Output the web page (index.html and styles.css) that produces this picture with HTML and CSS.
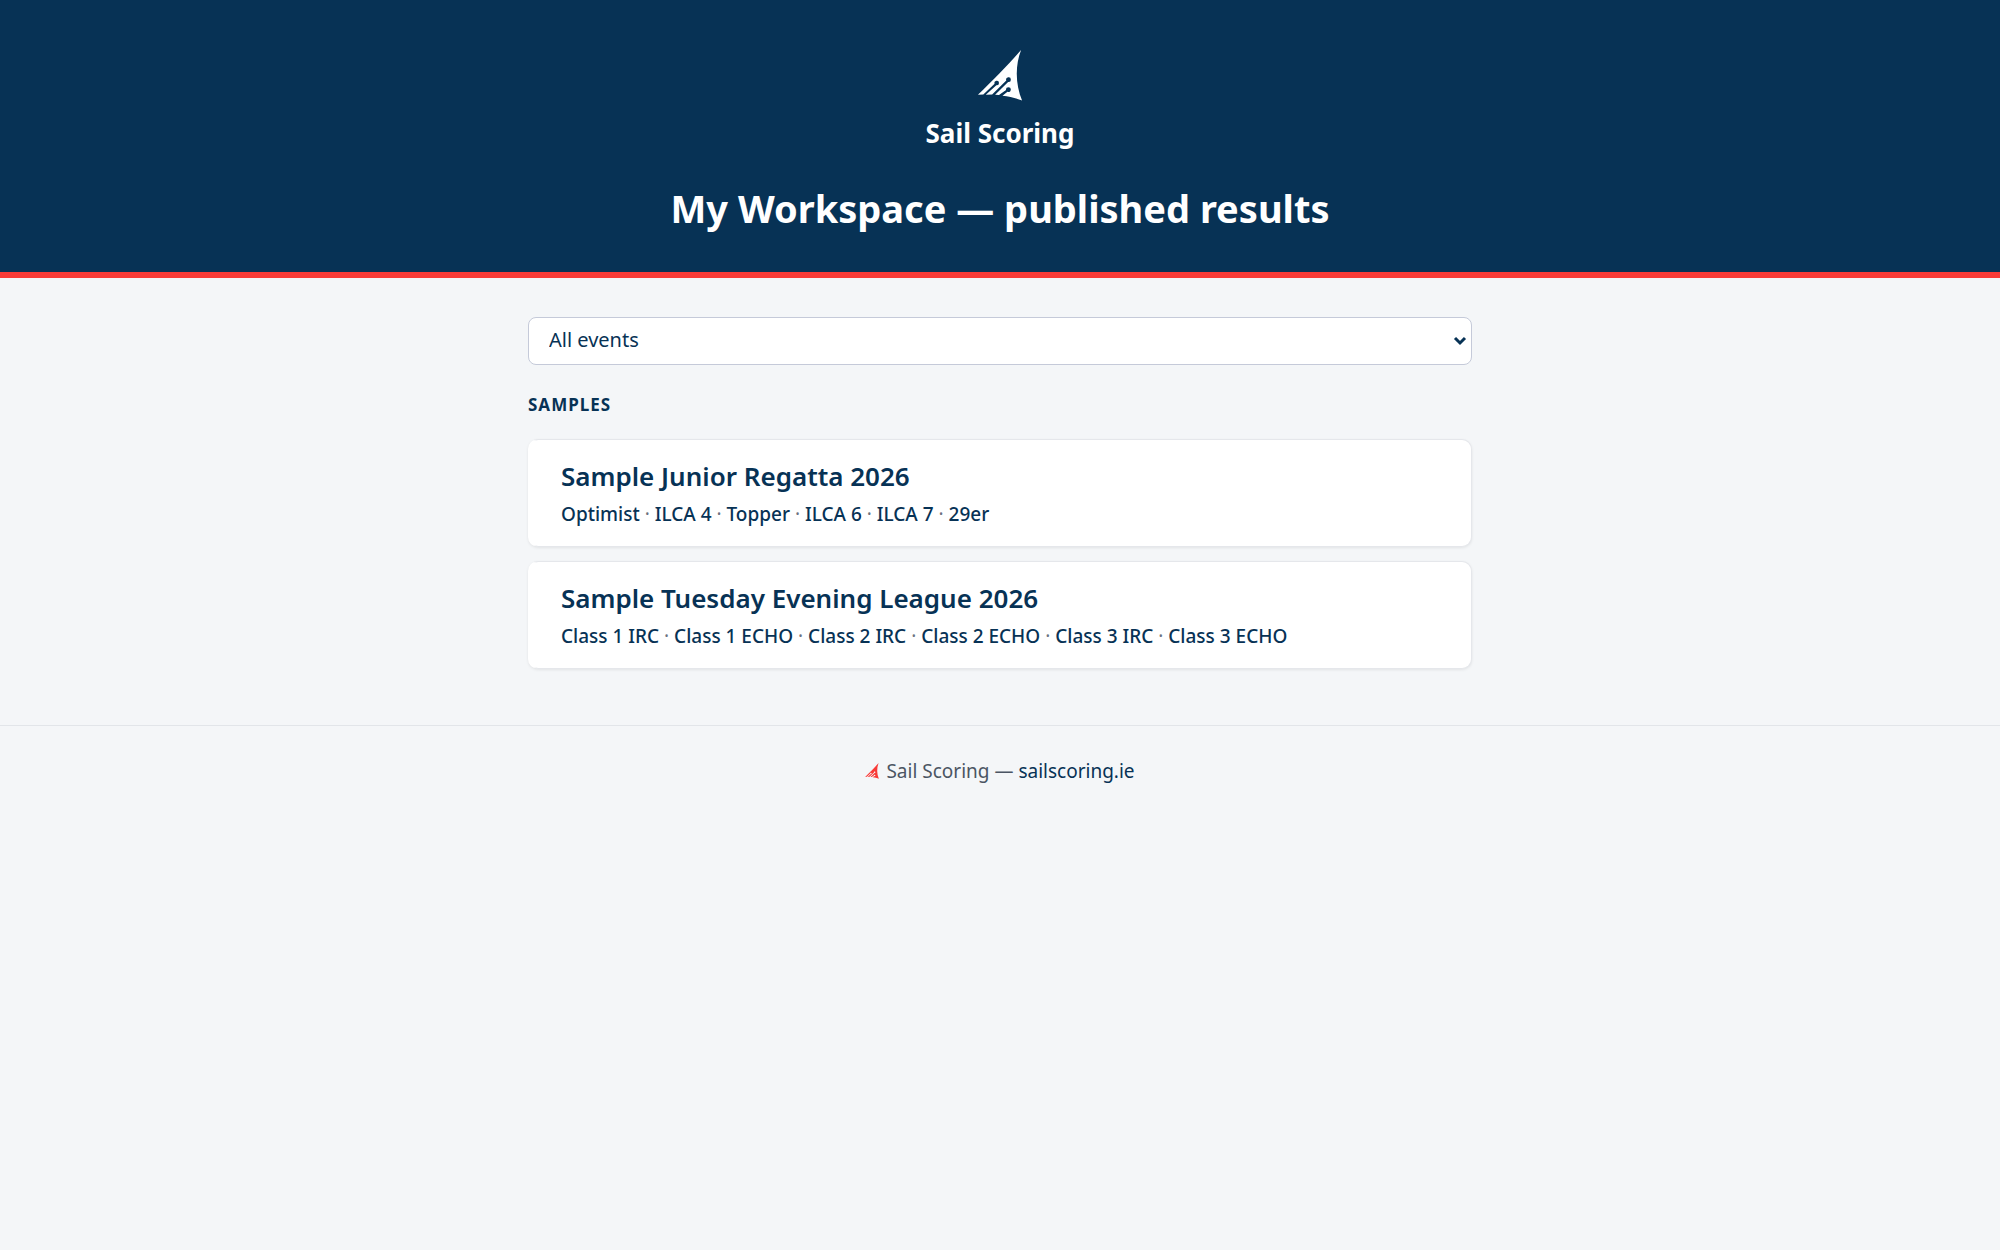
FILE: index.html
```html
<!DOCTYPE html>
<html lang="en">
<head>
<meta charset="utf-8">
<meta name="viewport" content="width=device-width, initial-scale=1">
<title>My Workspace — published results</title>
<link rel="stylesheet" href="styles.css">
</head>
<body>
<svg class="defs" width="0" height="0" aria-hidden="true">
  <symbol id="sail" viewBox="0 0 46 52">
    <path fill="currentColor" d="M44.500 0C33 13 17 30 .5 45.500L6 45.300L17.500 34.500A2.300 2.300 0 1 1 19.300 36L8.500 45.500L15 45.300L29.400 31A2.400 2.400 0 1 1 31.300 32.600L18 45.700L22 46L29.200 40.800A2.400 2.400 0 1 1 30.600 42.600L25.500 46.700C33 47.500 39 49 45.500 51.500C39 36 38 17 44.500 0Z"/>
  </symbol>
</svg>
<header class="site-header">
  <div class="brand">
    <svg class="brand-logo" aria-hidden="true"><use href="#sail"/></svg>
    <span class="brand-name">Sail Scoring</span>
  </div>
  <h1 class="page-title">My Workspace — published results</h1>
</header>
<main class="content">
  <select class="event-filter" aria-label="Filter by event">
    <option>All events</option>
    <option>Samples</option>
  </select>
  <h2 class="group-title">Samples</h2>
  <ul class="series-list">
    <li class="series-card">
      <h3 class="series-name"><a href="#junior">Sample Junior Regatta 2026</a></h3>
      <p class="fleets"><a href="#optimist">Optimist</a> · <a href="#ilca4">ILCA 4</a> · <a href="#topper">Topper</a> · <a href="#ilca6">ILCA 6</a> · <a href="#ilca7">ILCA 7</a> · <a href="#29er">29er</a></p>
    </li>
    <li class="series-card">
      <h3 class="series-name"><a href="#tuesday">Sample Tuesday Evening League 2026</a></h3>
      <p class="fleets"><a href="#c1irc">Class 1 IRC</a> · <a href="#c1echo">Class 1 ECHO</a> · <a href="#c2irc">Class 2 IRC</a> · <a href="#c2echo">Class 2 ECHO</a> · <a href="#c3irc">Class 3 IRC</a> · <a href="#c3echo">Class 3 ECHO</a></p>
    </li>
  </ul>
</main>
<footer class="site-footer">
  <svg class="footer-logo" aria-hidden="true"><use href="#sail"/></svg>
  <span>Sail Scoring — <a href="#home">sailscoring.ie</a></span>
</footer>
</body>
</html>
```
FILE: styles.css
```css
* {
  box-sizing: border-box;
}

body {
  margin: 0;
  background: #f4f6f8;
  color: #073255;
  font-family: "Noto Sans", sans-serif;
  font-size: 20px;
  line-height: 30px;
}

a {
  color: #073255;
  text-decoration: none;
}

.defs {
  display: block;
}

.site-header {
  padding: 50px 20px 36px;
  background: #073255;
  border-bottom: 6px solid #f93a37;
  color: #fff;
  text-align: center;
}

.brand {
  display: flex;
  flex-direction: column;
  align-items: center;
  gap: 12px;
}

.brand-logo {
  width: 46px;
  height: 51px;
}

.brand-name {
  font-size: 26px;
  font-weight: 700;
  line-height: 40px;
}

.page-title {
  margin: 28px 0 0;
  font-size: 38px;
  font-weight: 700;
  line-height: 55px;
}

.content {
  max-width: 984px;
  margin: 0 auto;
  padding: 39px 20px 56px;
}

.event-filter {
  display: block;
  width: 100%;
  height: 48px;
  padding: 0 20px 2px;
  border: 1px solid #c5cad9;
  border-radius: 8px;
  appearance: none;
  background: #fff url("data:image/svg+xml,%3Csvg xmlns='http://www.w3.org/2000/svg' width='14' height='10'%3E%3Cpath d='M2 2l5 5 5-5' fill='none' stroke='%23073255' stroke-width='3'/%3E%3C/svg%3E") no-repeat right 4px center;
  color: #073255;
  font: inherit;
}

.group-title {
  margin: 26px 0 20px;
  font-size: 17px;
  font-weight: 700;
  line-height: 28px;
  letter-spacing: 1px;
  text-transform: uppercase;
}

.series-list {
  display: grid;
  gap: 14px;
  margin: 0;
  padding: 0;
  list-style: none;
}

.series-card {
  padding: 17px 28px;
  border: 1px solid #e5e7eb;
  border-left: 5px solid #fff;
  border-radius: 10px;
  background: #fff;
  box-shadow: 0 1px 3px rgba(0, 0, 0, 0.08);
}

.series-name {
  margin: 0 0 3px;
  font-size: 26px;
  font-weight: 600;
  line-height: 39px;
}

.fleets {
  margin: 0;
  color: #6b7280;
  font-size: 19px;
}

.fleets a {
  font-weight: 500;
}

.site-footer {
  display: flex;
  justify-content: center;
  align-items: center;
  gap: 7px;
  padding: 30px 20px;
  border-top: 1px solid #e2e5e9;
  color: #4b5563;
  font-size: 19px;
}

.footer-logo {
  width: 14px;
  height: 16px;
  color: #f93a37;
}
```
